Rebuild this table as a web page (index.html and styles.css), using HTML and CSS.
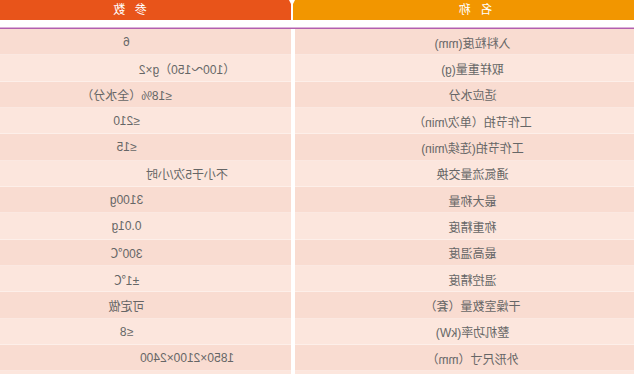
FILE: index.html
```html
<!DOCTYPE html>
<html lang="zh">
<head>
<meta charset="utf-8">
<title>参数</title>
<link rel="stylesheet" href="styles.css">
</head>
<body>
<div class="page">
  <div class="head">
    <div class="h name">名 称</div>
    <div class="h val">参 数</div>
  </div>
  <div class="rule"></div>
  <div class="rows">
    <div class="row odd"><div class="c name">入料粒度(mm)</div><div class="c val">6</div></div>
    <div class="row"><div class="c name">取样重量(g)</div><div class="c val wide">（100～150）g×2</div></div>
    <div class="row odd"><div class="c name">适应水分</div><div class="c val">≤18%（全水分）</div></div>
    <div class="row"><div class="c name">工作节拍（单次/min）</div><div class="c val">≤210</div></div>
    <div class="row odd"><div class="c name">工作节拍(连续/min)</div><div class="c val">≤15</div></div>
    <div class="row"><div class="c name">通氮流量交换</div><div class="c val wide">不小于5次/小时</div></div>
    <div class="row odd"><div class="c name">最大称量</div><div class="c val">3100g</div></div>
    <div class="row"><div class="c name">称重精度</div><div class="c val">0.01g</div></div>
    <div class="row odd"><div class="c name">最高温度</div><div class="c val">300℃</div></div>
    <div class="row"><div class="c name">温控精度</div><div class="c val">±1℃</div></div>
    <div class="row odd"><div class="c name">干燥室数量（套）</div><div class="c val">可定做</div></div>
    <div class="row"><div class="c name">整机功率(kW)</div><div class="c val">≤8</div></div>
    <div class="row odd"><div class="c name">外形尺寸（mm）</div><div class="c val wide">1850×2100×2400</div></div>
    <div class="row"><div class="c name"></div><div class="c val"></div></div>
  </div>
</div>
</body>
</html>
```
FILE: styles.css
```css
html, body {
  margin: 0;
  padding: 0;
  background: #ffffff;
}

.page {
  width: 634px;
  height: 374px;
  overflow: hidden;
  transform: scaleX(-1);
  font-family: "Liberation Sans", "Noto Sans CJK SC", sans-serif;
  font-size: 12px;
  color: #666666;
}

.head {
  position: relative;
  display: grid;
  grid-template-columns: 341px 291px;
  column-gap: 2px;
  height: 20px;
}

.head::after {
  content: "";
  position: absolute;
  left: 339px;
  top: 0;
  width: 0;
  height: 0;
  border-left: 3px solid transparent;
  border-right: 3px solid transparent;
  border-top: 6px solid #ffffff;
}

.h {
  display: flex;
  align-items: center;
  justify-content: center;
  color: #ffffff;
  letter-spacing: 3px;
  line-height: 20px;
}

.h.name {
  background: #f29600;
  padding-right: 21px;
}

.h.val {
  background: #e8541a;
  padding-left: 34px;
}

.rule {
  margin-top: 7px;
  height: 0;
  border-top: 1px solid #dcb0d9;
  border-bottom: 1px solid #b15fae;
}

.rows {
  display: grid;
  grid-auto-rows: 26.33px;
}

.row {
  display: grid;
  grid-template-columns: 339px 291px;
  column-gap: 4px;
}

.c {
  display: flex;
  align-items: center;
  justify-content: center;
  background: #fce6dd;
  white-space: nowrap;
  box-shadow: inset 0 -1px 0 rgba(255, 255, 255, 0.35);
}

.row.odd .c {
  background: #f9dcd1;
}

.c.name {
  padding-right: 16px;
}

.c.val {
  padding-left: 38px;
}

.c.val.wide {
  padding-right: 121px;
}
```
